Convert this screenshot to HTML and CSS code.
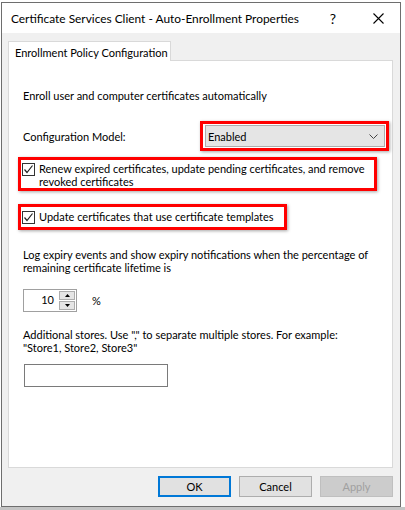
FILE: index.html
```html
<!DOCTYPE html>
<html lang="en">
<head>
    <meta charset="UTF-8">
    <title>Certificate Services Client - Auto-Enrollment Properties</title>
    <link rel="stylesheet" href="styles.css">
</head>
<body>
    <div class="dialog">
        <div class="titlebar">
            <span class="title">Certificate Services Client - Auto-Enrollment Properties</span>
            <span class="help">?</span>
            <svg class="close" width="11" height="11" viewBox="0 0 11 11">
                <path d="M0.5 0.5 L10.5 10.5 M10.5 0.5 L0.5 10.5" stroke="#000" stroke-width="1.1" fill="none"/>
            </svg>
        </div>

        <div class="body">
            <div class="tabs">
                <div class="tab">Enrollment Policy Configuration</div>
            </div>
            <div class="panel">
                <p class="intro">Enroll user and computer certificates automatically</p>

                <div class="row model-row">
                    <span>Configuration Model:</span>
                    <div class="mark mark-combo">
                        <div class="combo">
                            <span>Enabled</span>
                            <svg class="chevron" width="9" height="5" viewBox="0 0 9 5">
                                <path d="M0.5 0.5 L4.5 4.5 L8.5 0.5" stroke="#444" fill="none"/>
                            </svg>
                        </div>
                    </div>
                </div>

                <div class="mark mark-renew">
                    <label class="check">
                        <span class="box"><svg width="11" height="11" viewBox="0 0 11 11"><path d="M1.5 5.5 L4 8.5 L9.5 1.5" stroke="#222" stroke-width="1.2" fill="none"/></svg></span>
                        <span>Renew expired certificates, update pending certificates, and remove revoked certificates</span>
                    </label>
                </div>

                <div class="mark mark-update">
                    <label class="check">
                        <span class="box"><svg width="11" height="11" viewBox="0 0 11 11"><path d="M1.5 5.5 L4 8.5 L9.5 1.5" stroke="#222" stroke-width="1.2" fill="none"/></svg></span>
                        <span>Update certificates that use certificate templates</span>
                    </label>
                </div>

                <p class="expiry">Log expiry events and show expiry notifications when the percentage of remaining certificate lifetime is</p>

                <div class="row spin-row">
                    <div class="spin">
                        <span class="spin-value">10</span>
                        <div class="spin-btns">
                            <span class="spin-btn"><svg width="5" height="3" viewBox="0 0 5 3"><path d="M0 3 L2.5 0 L5 3 Z" fill="#000"/></svg></span>
                            <span class="spin-btn"><svg width="5" height="3" viewBox="0 0 5 3"><path d="M0 0 L2.5 3 L5 0 Z" fill="#000"/></svg></span>
                        </div>
                    </div>
                    <span class="pct">%</span>
                </div>

                <p class="stores">Additional stores. Use "," to separate multiple stores. For example: "Store1, Store2, Store3"</p>

                <div class="textbox"></div>
            </div>

            <div class="buttons">
                <button class="btn btn-default">OK</button>
                <button class="btn">Cancel</button>
                <button class="btn" disabled>Apply</button>
            </div>
        </div>
    </div>
</body>
</html>
```

FILE: styles.css
```css
body {
    margin: 0;
    height: 510px;
    overflow: hidden;
    background: linear-gradient(#fff 507px, #c4c4c4 507px);
    font-family: Lato, "Noto Sans", sans-serif;
    font-size: 11px;
    line-height: 13px;
    color: #000;
}

p {
    margin: 0;
}

.dialog {
    margin: 2px 0 0 1px;
    width: 400px;
    height: 505px;
    box-sizing: border-box;
    border: 1px solid #6e6e6e;
    background: #f0f0f0;
    display: flex;
    flex-direction: column;
}

.titlebar {
    height: 30px;
    flex: none;
    background: #fff;
    display: flex;
    align-items: center;
    padding-left: 9px;
    font-size: 11.9px;
}
.title {
    flex: 1;
    white-space: nowrap;
}
.help {
    font-size: 14px;
    margin-right: 37px;
}
.close {
    margin-right: 16px;
}

.body {
    flex: 1;
    display: flex;
    flex-direction: column;
    padding: 8px 7px 0 6px;
}

.tabs {
    display: flex;
}
.tab {
    position: relative;
    z-index: 1;
    width: 163px;
    height: 20px;
    box-sizing: border-box;
    border: 1px solid #d9d9d9;
    border-bottom: none;
    background: #fff;
    padding: 4px 0 0 6px;
    margin-bottom: -1px;
    white-space: nowrap;
}

.panel {
    height: 408px;
    box-sizing: border-box;
    border: 1px solid #d9d9d9;
    background: #fff;
    padding: 28px 0 0 14px;
}

.row {
    display: flex;
    align-items: center;
}

/* red call-out frames */
.mark {
    border: 3px solid #f00;
    box-shadow: 1px 1px 3px rgba(0, 0, 0, 0.35);
    box-sizing: border-box;
}

.model-row {
    margin-top: 19px;
    height: 30px;
}
.mark-combo {
    margin-left: auto;
    margin-right: 3px;
    width: 189px;
    height: 30px;
    padding: 1px 1px 0 2px;
}
.combo {
    height: 22px;
    box-sizing: border-box;
    border: 1px solid #adadad;
    background: #e5e5e5;
    display: flex;
    align-items: center;
    justify-content: space-between;
    padding: 0 6px 0 2px;
}

.check {
    display: flex;
    align-items: flex-start;
}
.box {
    flex: none;
    width: 13px;
    height: 13px;
    box-sizing: border-box;
    border: 1px solid #333;
    display: flex;
    align-items: center;
    justify-content: center;
    margin-right: 4px;
    margin-top: 1px;
}

.mark-renew {
    margin: 6px 0 0 -5px;
    width: 359px;
    height: 34px;
    padding: 2px 0 0 1px;
}
.mark-update {
    margin: 13px 0 0 -5px;
    width: 269px;
    height: 26px;
    padding: 3px 0 0 1px;
}

.expiry {
    margin-top: 18px;
    width: 360px;
}

.spin-row {
    margin-top: 15px;
}
.spin {
    width: 54px;
    height: 23px;
    box-sizing: border-box;
    border: 1px solid #a0a0a0;
    display: flex;
}
.spin-value {
    flex: 1;
    text-align: right;
    padding-right: 5px;
    line-height: 20px;
}
.spin-btns {
    width: 16px;
    display: flex;
    flex-direction: column;
    gap: 1px;
    padding: 1px 1px 1px 0;
}
.spin-btn {
    flex: 1;
    background: #e5e5e5;
    border: 1px solid #adadad;
    display: flex;
    align-items: center;
    justify-content: center;
}
.pct {
    margin-left: 15px;
}

.stores {
    margin-top: 16px;
    width: 330px;
}

.textbox {
    margin: 10px 0 0 1px;
    width: 144px;
    height: 23px;
    box-sizing: border-box;
    border: 1px solid #7a7a7a;
}

.buttons {
    display: flex;
    justify-content: flex-end;
    gap: 8px;
    margin-top: 8px;
}
.btn {
    width: 73px;
    height: 21px;
    box-sizing: border-box;
    border: 1px solid #adadad;
    background: #e1e1e1;
    font: inherit;
    padding: 0;
    color: #000;
}
.btn-default {
    border: 2px solid #0078d7;
}
.btn:disabled {
    background: #cccccc;
    border-color: #bfbfbf;
    color: #a0a0a0;
}
```
